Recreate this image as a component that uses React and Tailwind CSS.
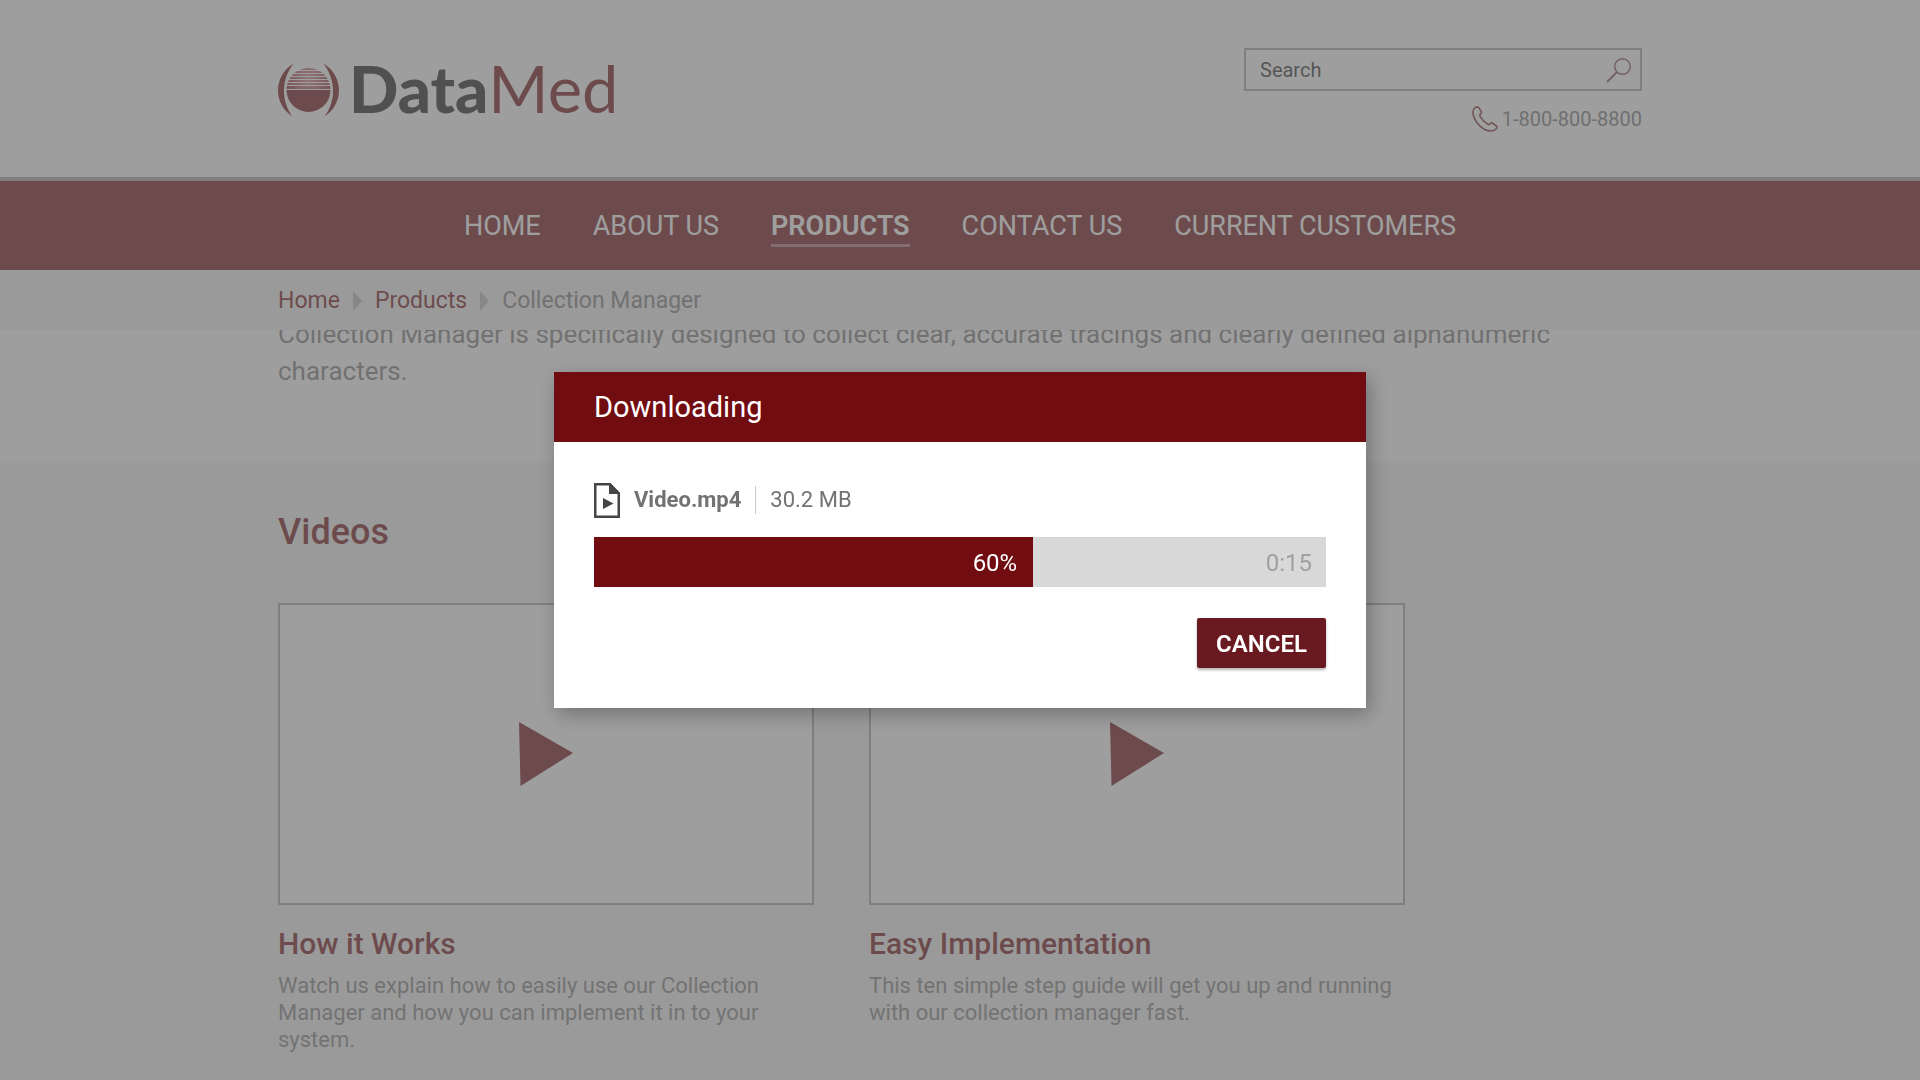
const navItems = [
  { label: 'HOME' },
  { label: 'ABOUT US' },
  { label: 'PRODUCTS', active: true },
  { label: 'CONTACT US' },
  { label: 'CURRENT CUSTOMERS' },
];

const videos = [
  {
    title: 'How it Works',
    text: 'Watch us explain how to easily use our Collection Manager and how you can implement it in to your system.',
  },
  {
    title: 'Easy Implementation',
    text: 'This ten simple step guide will get you up and running with our collection manager fast.',
  },
];

function Container({ className = '', children }) {
  return <div className={`mx-auto w-full max-w-[1364px] ${className}`}>{children}</div>;
}

function LogoMark() {
  return (
    <svg className="mt-[7px]" width="61" height="54" viewBox="0 0 61 54" aria-hidden="true">
      <defs>
        <radialGradient id="sunFade" gradientUnits="userSpaceOnUse" cx="30.5" cy="16" r="22">
          <stop offset="0" stopColor="#e08a92" />
          <stop offset="1" stopColor="#8a2a30" />
        </radialGradient>
        <clipPath id="sunTop">
          <circle cx="30.5" cy="27" r="22" />
        </clipPath>
      </defs>
      <path d="M15.5 0.5 C-5 13 -5 41 14.5 53.5 C3 38 3 17 15.5 0.5Z" fill="#710c11" />
      <path d="M45.500 0.5 C66 13 66 41 46.5 53.5 C58 38 58 17 45.5 0.5Z" fill="#710c11" />
      <g clipPath="url(#sunTop)">
        {[5, 8, 11, 14, 17, 20].map((y) => (
          <rect key={y} x="8" y={y} width="45" height="2" fill="url(#sunFade)" />
        ))}
        <rect x="8" y="23" width="45" height="3" fill="url(#sunFade)" />
        <rect x="8" y="27" width="45" height="23" fill="#710c11" />
      </g>
    </svg>
  );
}

function Logo() {
  return (
    <a href="#home" aria-label="DataMed" className="flex items-start gap-2.5">
      <LogoMark />
      <span className="font-['Lato',sans-serif] text-[65px] leading-[64px] text-[#1c1c1c]">
        <span className="font-black">Data</span>
        <span className="text-[#710c11]">Med</span>
      </span>
    </a>
  );
}

function Header() {
  return (
    <header className="sticky top-0 z-10">
      <div className="border-b-4 border-[#a5a5a5] bg-white">
        <Container className="flex items-start justify-between pt-12 pb-11">
          <div className="pt-2">
            <Logo />
          </div>
          <div className="flex w-[398px] flex-col items-end gap-3.5">
            <label className="flex h-[43px] w-full items-center border-2 border-[#a5a5a5] pr-2 pl-3.5">
              <span className="sr-only">Search</span>
              <input
                type="search"
                placeholder="Search"
                className="min-w-0 flex-1 bg-transparent text-xl text-[#333] outline-none placeholder:text-[#2c2c2c]"
              />
              <svg width="26" height="26" viewBox="0 0 26 26" fill="none" stroke="#8c4a4e" strokeWidth="1.5" aria-hidden="true">
                <circle cx="16.5" cy="9.5" r="7.8" />
                <path d="M11 15 L1 25" strokeWidth="2" />
              </svg>
            </label>
            <a href="tel:18008008800" className="flex items-center gap-1 text-xl leading-7 text-[#777]">
              <svg width="26" height="26" viewBox="0 0 26 26" fill="none" stroke="#7a2a2f" strokeWidth="1.6" strokeLinejoin="round" aria-hidden="true">
                <path d="M3.2 1.6 C1.2 2.9 0.7 4.8 1 7.2 C1.9 15.5 10.5 24.7 18.5 25 C21 25.1 23 24.3 24.6 22.5 C25.3 21.6 25.2 20.7 24.3 20 L20.8 17.3 C19.9 16.6 19 16.7 18.3 17.5 C17.5 18.6 16.6 18.8 15.5 18.1 C12.3 16.1 9.9 13.5 8.1 10.3 C7.5 9.1 7.7 8.4 8.7 7.7 C9.6 7 9.7 6.2 9.1 5.2 L7 1.9 C6 0.5 4.5 0.7 3.2 1.6Z" />
              </svg>
              1-800-800-8800
            </a>
          </div>
        </Container>
      </div>

      <nav aria-label="Main" className="flex h-[89px] items-center justify-center gap-[52px] bg-[#710c11] text-[27px] leading-8 text-white">
        {navItems.map((item) => (
          <a
            key={item.label}
            href="#nav"
            aria-current={item.active ? 'page' : undefined}
            className={item.active ? 'border-b-3 border-[#b0707a] pt-[5px] pb-0.5 font-semibold' : ''}
          >
            {item.label}
          </a>
        ))}
      </nav>

      <div className="bg-[#f4f4f4]">
        <Container>
          <nav aria-label="Breadcrumb" className="flex h-[60px] items-center gap-[13px] pt-0.5 text-[23px] text-[#710c11]">
            <a href="#home">Home</a>
            <BreadcrumbArrow />
            <a href="#products">Products</a>
            <BreadcrumbArrow />
            <span className="text-[#7c7c7c]">Collection Manager</span>
          </nav>
        </Container>
      </div>
    </header>
  );
}

function BreadcrumbArrow() {
  return (
    <svg width="9" height="20" viewBox="0 0 9 20" aria-hidden="true">
      <path d="M0 0 L9 10 L0 20Z" fill="#bdbdbd" />
    </svg>
  );
}

function VideoCard({ title, text }) {
  return (
    <article>
      <button
        type="button"
        aria-label={`Play ${title}`}
        className="flex h-[302px] w-full items-center justify-center border-2 border-[#a5a5a5] bg-white"
      >
        <svg width="54" height="64" viewBox="0 0 54 64" aria-hidden="true">
          <path d="M0 0 L54 31 L1.5 64Z" fill="#710c11" />
        </svg>
      </button>
      <h3 className="mt-[21px] text-[30px] leading-9 font-medium text-[#710c11]">{title}</h3>
      <p className="mt-2.5 text-[22px] leading-[27px] text-[#808080]">{text}</p>
    </article>
  );
}

function DownloadDialog({ percent }) {
  return (
    <div className="fixed inset-0 z-20 flex items-center justify-center bg-[#6c6c6c]/66">
      <section
        role="dialog"
        aria-modal="true"
        aria-labelledby="download-title"
        className="w-[812px] max-w-full bg-white shadow-[4px_6px_18px_rgba(0,0,0,0.28)]"
      >
        <h2 id="download-title" className="flex h-[70px] items-center bg-[#710c11] px-10 pt-0.5 text-[29px] text-white">
          Downloading
        </h2>
        <div className="p-10">
          <div className="flex items-center text-[22px] leading-9 text-[#727272]">
            <svg width="26" height="35" viewBox="0 0 26 35" aria-hidden="true">
              <path d="M1.25 1.25 H15.5 L24.75 10.5 V33.75 H1.25Z" fill="none" stroke="#454545" strokeWidth="2.5" />
              <path d="M15 0 H16.5 L26 10 V11 H15Z M9 15 L19.5 20.5 L9 26Z" fill="#454545" />
            </svg>
            <span className="ml-3.5 font-bold">Video.mp4</span>
            <span className="mx-3.5 h-7 w-px bg-[#c8c8c8]" />
            <span>30.2 MB</span>
          </div>
          <div
            role="progressbar"
            aria-label="Download progress"
            aria-valuenow={percent}
            aria-valuemin={0}
            aria-valuemax={100}
            className="mt-[19px] flex h-[50px] items-stretch bg-[#d8d8d8] text-2xl"
          >
            <div className="flex items-center justify-end bg-[#710c11] pt-0.5 pr-4 text-white" style={{ width: `${percent}%` }}>
              {percent}%
            </div>
            <div className="flex flex-1 items-center justify-end pt-0.5 pr-3.5 text-[#a0a0a0]">0:15</div>
          </div>
          <div className="mt-[31px] flex justify-end">
            <button
              type="button"
              className="h-[50px] rounded-xs bg-[#681a20] px-[19px] pt-0.5 text-2xl font-semibold text-white shadow-[0_2px_3px_rgba(0,0,0,0.3)]"
            >
              CANCEL
            </button>
          </div>
        </div>
      </section>
    </div>
  );
}

export default function App() {
  return (
    <div className="h-screen overflow-hidden bg-[#f4f4f4] font-['Roboto',sans-serif]">
      <Header />
      <main>
        <section className="-mt-3.5 bg-white pb-[71px]">
          <Container>
            <p className="text-[26px] leading-[37px] text-[#7c7c7c]">
              Collection Manager is specifically designed to collect clear, accurate tracings and clearly defined alphanumeric
              characters.
            </p>
          </Container>
        </section>
        <section className="pt-[51px] pb-8">
          <Container>
            <h2 className="text-4xl leading-10 font-medium text-[#710c11]">Videos</h2>
            <div className="mt-[51px] grid max-w-[1127px] grid-cols-2 gap-[55px]">
              {videos.map((video) => (
                <VideoCard key={video.title} {...video} />
              ))}
            </div>
          </Container>
        </section>
      </main>
      <DownloadDialog percent={60} />
    </div>
  );
}
